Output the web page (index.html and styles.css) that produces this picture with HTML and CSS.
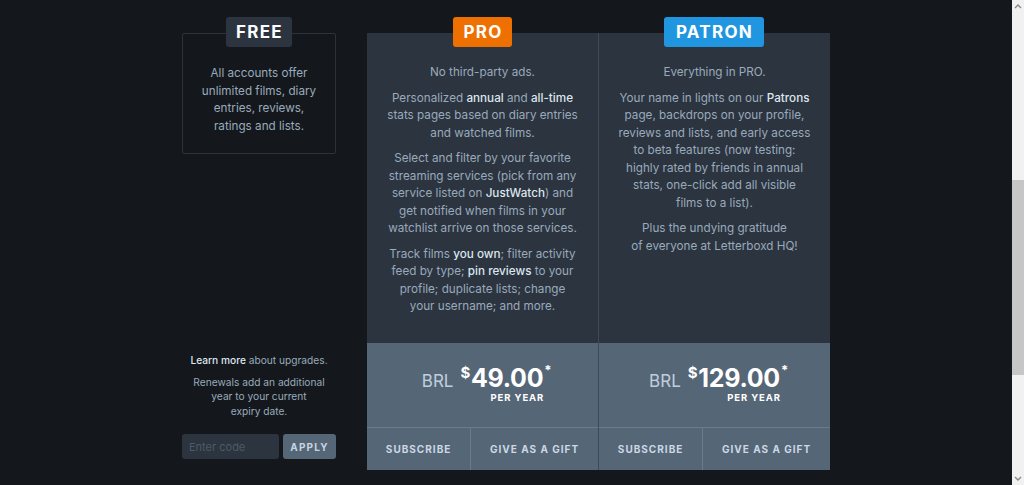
FILE: index.html
```html
<!DOCTYPE html>
<html lang="en">
<head>
<meta charset="utf-8">
<title>Upgrade</title>
<link rel="stylesheet" href="styles.css">
</head>
<body>
<div class="page">
  <div class="plans">
    <section class="tier tier-free">
      <div class="badge badge-free">FREE</div>
      <div class="free-box">
        <p>All accounts offer unlimited films, diary entries, reviews, ratings and lists.</p>
      </div>
      <div class="free-foot">
        <p class="learn"><a class="em" href="#">Learn more</a> about upgrades.</p>
        <p class="renew">Renewals add an additional<br>year to your current<br>expiry date.</p>
        <form class="code-form">
          <input class="code-input" type="text" placeholder="Enter code">
          <button class="apply" type="button">APPLY</button>
        </form>
      </div>
    </section>

    <div class="paid">
      <section class="tier tier-pro">
        <div class="badge badge-pro">PRO</div>
        <div class="card">
          <div class="features">
            <p>No third-party ads.</p>
            <p>Personalized <b>annual</b> and <b>all-time</b> stats pages based on diary entries and watched films.</p>
            <p>Select and filter by your favorite streaming services (pick from any service listed on <b>JustWatch</b>) and get notified when films in your watchlist arrive on those services.</p>
            <p>Track films <b>you own</b>; filter activity feed by type; <b>pin reviews</b> to your profile; duplicate lists; change<br>your username; and more.</p>
          </div>
          <div class="price-box">
            <span class="cur">BRL</span>
            <span class="figure">
              <span class="value"><span class="sym">$</span>49.00</span>
              <span class="per">PER YEAR</span>
            </span>
          </div>
          <div class="actions">
            <a class="action" href="#">SUBSCRIBE</a>
            <a class="action" href="#">GIVE AS A GIFT</a>
          </div>
        </div>
      </section>

      <section class="tier tier-patron">
        <div class="badge badge-patron">PATRON</div>
        <div class="card">
          <div class="features">
            <p>Everything in PRO.</p>
            <p>Your name in lights on our <b>Patrons</b> page, backdrops on your profile, reviews and lists, and early access to beta features (now testing:<br>highly rated by friends in annual stats, one-click add all visible<br>films to a list).</p>
            <p>Plus the undying gratitude<br>of everyone at Letterboxd HQ!</p>
          </div>
          <div class="price-box">
            <span class="cur">BRL</span>
            <span class="figure">
              <span class="value"><span class="sym">$</span>129.00</span>
              <span class="per">PER YEAR</span>
            </span>
          </div>
          <div class="actions">
            <a class="action" href="#">SUBSCRIBE</a>
            <a class="action" href="#">GIVE AS A GIFT</a>
          </div>
        </div>
      </section>
    </div>
  </div>
</div>
<div class="scrollbar">
  <div class="sb-arrow">
    <svg width="8" height="6" viewBox="0 0 8 6"><path d="M1 5 L4 2 L7 5" fill="none" stroke="#8a8a8a" stroke-width="1.4"/></svg>
  </div>
  <div class="sb-track"><div class="sb-thumb"></div></div>
  <div class="sb-arrow">
    <svg width="8" height="6" viewBox="0 0 8 6"><path d="M1 1 L4 4 L7 1" fill="none" stroke="#8a8a8a" stroke-width="1.4"/></svg>
  </div>
</div>
</body>
</html>
```

FILE: styles.css
```css
* { box-sizing: border-box; }

html, body {
  margin: 0;
  height: 100%;
}

body {
  display: flex;
  background: #14181c;
  color: #99aabb;
  font-family: Inter, "Noto Sans", sans-serif;
  font-size: 11.7px;
  overflow: hidden;
}

.page {
  flex: 1;
  display: flex;
  justify-content: center;
  padding-top: 17px;
}

.plans {
  display: flex;
  gap: 31px;
  height: 453px;
}

.tier {
  display: flex;
  flex-direction: column;
  align-items: center;
}

.badge {
  position: relative;
  z-index: 1;
  height: 30px;
  border-radius: 3px;
  color: #fff;
  font-weight: 700;
  font-size: 17px;
  letter-spacing: 1.3px;
  line-height: 31px;
  margin-bottom: -14px;
}

.badge-free { background: #2c3440; padding: 0 9px 0 10px; }
.badge-pro { background: #ee7000; padding: 0 9px 0 10px; }
.badge-patron { background: #2196e0; padding: 0 11px 0 12px; }

p { margin: 0; }

/* free column */
.tier-free { width: 154px; }

.free-box {
  width: 154px;
  border: 1px solid #2a323c;
  border-radius: 2px;
  padding: 31px 16px 18px;
  text-align: center;
  line-height: 17.5px;
}

.free-foot {
  margin-top: auto;
  width: 100%;
  text-align: center;
  font-size: 10.2px;
  line-height: 14.5px;
  margin-bottom: 11px;
}

.em { color: #dde6ee; font-weight: 500; text-decoration: none; }

.learn { margin-bottom: 7px; }

.code-form {
  display: flex;
  gap: 4px;
  margin-top: 16px;
}

.code-input {
  width: 97px;
  height: 25px;
  border: none;
  border-radius: 3px;
  background: #2c3440;
  padding: 0 7px;
  font-family: inherit;
  font-size: 11px;
  color: #99aabb;
  outline: none;
}
.code-input::placeholder { color: #4d5a67; }

.apply {
  flex: 1;
  height: 25px;
  border: none;
  border-radius: 3px;
  background: #556677;
  color: #c8d4e0;
  font-family: inherit;
  font-weight: 700;
  font-size: 10px;
  letter-spacing: 1.2px;
  padding: 0;
}

/* paid columns */
.paid {
  display: flex;
}

.tier-pro { width: 231px; }
.tier-patron { width: 232px; }

.card {
  flex: 1;
  width: 100%;
  display: flex;
  flex-direction: column;
  background: #2c3440;
}

.tier-patron .card { border-left: 1px solid #3e4a57; }

.features {
  flex: 1;
  padding: 31px 16px 0;
  text-align: center;
  line-height: 17.5px;
}

.features p + p { margin-top: 8px; }

.features b { color: #dde6ee; font-weight: 500; }

.price-box {
  height: 84px;
  background: #556677;
  display: flex;
  justify-content: center;
  align-items: baseline;
  padding-top: 22px;
  gap: 7px;
}

.cur {
  color: #c0cfdd;
  font-size: 17px;
}

.figure {
  display: inline-flex;
  flex-direction: column;
  align-items: flex-end;
}

.value {
  position: relative;
  color: #fff;
  font-weight: 700;
  font-size: 25px;
  line-height: 26px;
  letter-spacing: -0.3px;
}

.value::after {
  content: "*";
  position: absolute;
  left: 100%;
  top: -1px;
  font-size: 13px;
  line-height: 13px;
  margin-left: 1px;
}

.sym {
  font-size: 15px;
  vertical-align: top;
  line-height: 15px;
  margin-right: 1px;
}

.per {
  color: #fff;
  font-weight: 700;
  font-size: 9.5px;
  letter-spacing: 0.9px;
  line-height: 14px;
  margin-right: -1px;
}

.actions {
  height: 43px;
  display: flex;
  border-top: 1px solid #6b7b8b;
  background: #556677;
}

.action {
  flex: 1 1 auto;
  display: flex;
  align-items: center;
  justify-content: center;
  color: #ccd8e4;
  font-weight: 700;
  font-size: 10px;
  letter-spacing: 1px;
  padding-bottom: 1px;
  text-decoration: none;
}

.action + .action { border-left: 1px solid #6b7b8b; }

/* scrollbar */
.scrollbar {
  width: 12px;
  background: #f1f1f1;
  display: flex;
  flex-direction: column;
}

.sb-arrow {
  height: 12px;
  display: flex;
  align-items: center;
  justify-content: center;
}

.sb-track {
  flex: 1;
}

.sb-thumb {
  margin-top: 168px;
  height: 195px;
  background: #c6c6c6;
}
```
